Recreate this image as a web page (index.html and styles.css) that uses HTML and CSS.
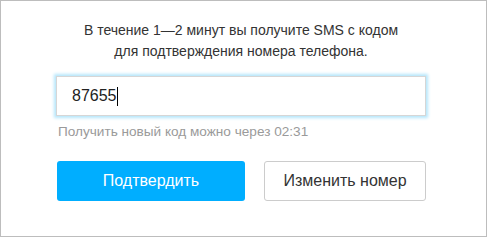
FILE: index.html
```html
<!DOCTYPE html>
<html lang="ru">
<head>
  <meta charset="UTF-8" />
  <meta name="viewport" content="width=device-width, initial-scale=1.0" />
  <title>Подтверждение номера</title>
  <link rel="stylesheet" href="styles.css">
</head>
<body>
  <div class="confirm-box">
    <p class="intro">В течение 1—2 минут вы получите SMS с кодом<br>для подтверждения номера телефона.</p>

    <form class="confirm-form">
      <div class="code-field">87655<span class="caret"></span></div>
      <div class="hint">Получить новый код можно через 02:31</div>

      <div class="actions">
        <button type="submit" class="btn btn-primary">Подтвердить</button>
        <button type="button" class="btn btn-outline">Изменить номер</button>
      </div>
    </form>
  </div>
</body>
</html>
```

FILE: styles.css
```css
* {
  box-sizing: border-box;
}

body {
  margin: 0;
  font-family: 'Liberation Sans', Arial, sans-serif;
  color: #333;
  background: #fff;
}

.confirm-box {
  width: 487px;
  height: 237px;
  border: 1px solid #bdbdbd;
  padding: 19px 60px 0 55px;
}

.intro {
  margin: 0 0 14px;
  font-size: 14px;
  line-height: 21px;
  text-align: center;
}

.code-field {
  display: flex;
  align-items: center;
  width: 370px;
  height: 40px;
  padding: 0 15px;
  border: 1px solid #d6d6d6;
  box-shadow: 0 0 3px 2px #b5e6fb;
  font-size: 16px;
  color: #222;
}

.caret {
  display: inline-block;
  width: 1px;
  height: 19px;
  background: #000;
}

.hint {
  margin-top: 7px;
  padding-left: 2px;
  font-size: 13.6px;
  line-height: 18px;
  color: #9a9a9a;
}

.actions {
  display: flex;
  justify-content: space-between;
  width: 370px;
  margin-top: 20px;
  padding-left: 1px;
}

.btn {
  height: 40px;
  border-radius: 3px;
  font-family: inherit;
  font-size: 16px;
  cursor: pointer;
}

.btn-primary {
  width: 188px;
  border: none;
  background-color: #00aeff;
  color: #fff;
}

.btn-outline {
  width: 162px;
  border: 1px solid #ccc;
  background-color: #fff;
  color: #333;
}
```
